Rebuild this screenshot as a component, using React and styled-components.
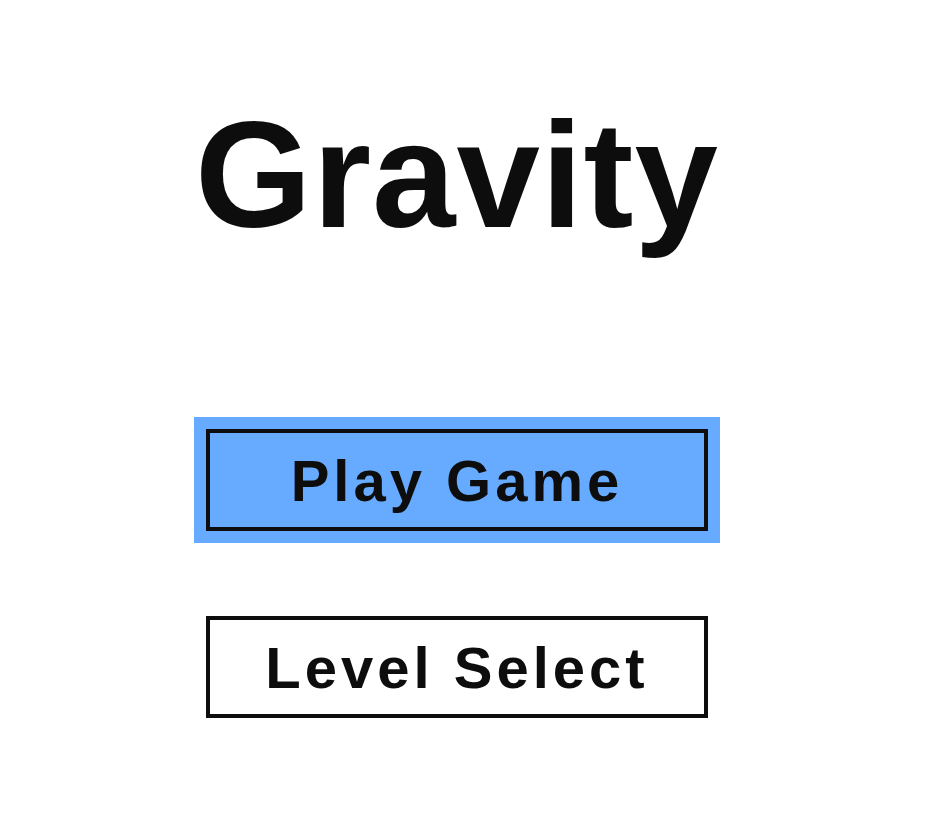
import React from 'react';
import styled, { createGlobalStyle } from 'styled-components';

const GlobalStyle = createGlobalStyle`
 html, body {
  margin: 0;
  padding: 0;
  background: #ffffff;
 }
 body {
  font-family: "Liberation Sans", Arial, sans-serif;
  color: #0d0d0d;
 }
`;

const Menu = styled.main`
 display: flex;
 flex-direction: column;
 align-items: center;
 padding: 89px 14px 0 0;
 min-height: 834px;
 box-sizing: border-box;
`;

const Title = styled.h1`
 margin: 0 0 167px;
 font-size: 150px;
 font-weight: 700;
 line-height: normal;
 letter-spacing: 1px;
`;

const Buttons = styled.div`
 display: flex;
 flex-direction: column;
 gap: 85px;
`;

const MenuButton = styled.button`
 width: 502px;
 height: 102px;
 box-sizing: border-box;
 border: 4px solid #0d0d0d;
 border-radius: 0;
 background: ${({ selected }) => (selected ? '#66abff' : '#ffffff')};
 outline: ${({ selected }) => (selected ? '12px solid #66abff' : 'none')};
 font-family: "Liberation Sans", Arial, sans-serif;
 font-size: 58px;
 font-weight: 700;
 letter-spacing: 4px;
 color: #0d0d0d;
 padding: 0;
 cursor: pointer;
`;

const menuItems = [
 { title: 'Play Game', selected: true },
 { title: 'Level Select', selected: false },
];

const App = () => {
 return (
  <>
   <GlobalStyle />
   <Menu>
    <Title>Gravity</Title>
    <Buttons>
     {menuItems.map((item, index) => (
      <MenuButton key={index} selected={item.selected}>
       {item.title}
      </MenuButton>
     ))}
    </Buttons>
   </Menu>
  </>
 );
};

export default App;
